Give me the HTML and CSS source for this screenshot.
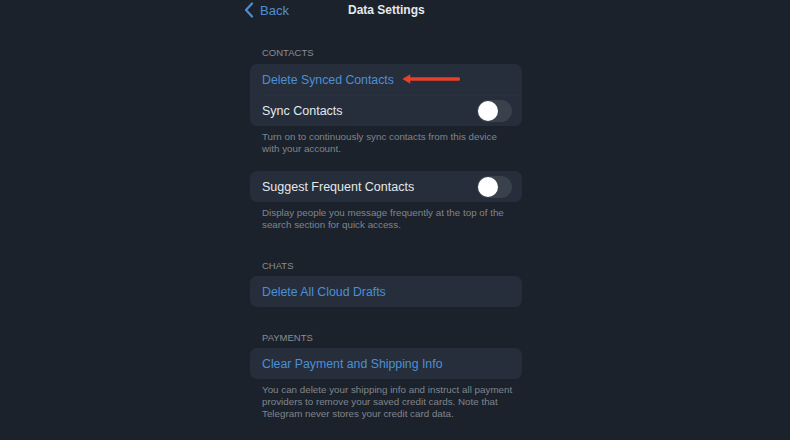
FILE: index.html
```html
<!DOCTYPE html>
<html>
<head>
<meta charset="utf-8">
<link rel="stylesheet" href="styles.css">
</head>
<body>
<div class="page">
  <header class="nav">
    <div class="back">
      <svg class="chev" width="10" height="16" viewBox="0 0 10 16"><path d="M8 1.5 L2 8 L8 14.5" fill="none" stroke="#4d8fd5" stroke-width="2.2" stroke-linecap="round" stroke-linejoin="round"/></svg>
      <span>Back</span>
    </div>
    <div class="title">Data Settings</div>
  </header>

  <div class="label first">CONTACTS</div>
  <div class="card">
    <div class="row link">
      <span>Delete Synced Contacts</span>
      <svg class="arrow" width="58" height="10" viewBox="0 0 58 10"><path d="M0.3 5 L8.5 0.3 L8 3.3 L57 3.3 Q58 3.3 58 5 Q58 6.7 57 6.7 L8 6.7 L8.5 9.7 Z" fill="#e8402a"/></svg>
    </div>
    <div class="sep"></div>
    <div class="row short">
      <span>Sync Contacts</span>
      <div class="toggle"><div class="knob"></div></div>
    </div>
  </div>
  <div class="foot">Turn on to continuously sync contacts from this device<br>with your account.</div>

  <div class="card card2">
    <div class="row">
      <span>Suggest Frequent Contacts</span>
      <div class="toggle"><div class="knob"></div></div>
    </div>
  </div>
  <div class="foot">Display people you message frequently at the top of the<br>search section for quick access.</div>

  <div class="label chats">CHATS</div>
  <div class="card">
    <div class="row link"><span>Delete All Cloud Drafts</span></div>
  </div>

  <div class="label pay">PAYMENTS</div>
  <div class="card">
    <div class="row link"><span>Clear Payment and Shipping Info</span></div>
  </div>
  <div class="foot">You can delete your shipping info and instruct all payment<br>providers to remove your saved credit cards. Note that<br>Telegram never stores your credit card data.</div>
</div>
</body>
</html>
```
FILE: styles.css
```css
html, body {
  margin: 0;
  padding: 0;
  background: #1c222b;
  height: 100%;
  overflow: hidden;
}
body {
  font-family: "Liberation Sans", Arial, sans-serif;
  color: #e6e8eb;
}
.page {
  width: 272px;
  margin-left: 250px;
  display: flex;
  flex-direction: column;
}
.nav {
  height: 20px;
  display: flex;
  align-items: center;
  position: relative;
  margin-left: -6px;
}
.back {
  display: flex;
  align-items: center;
  gap: 6px;
  color: #4d8fd5;
  font-size: 13px;
}
.chev { display: block; }
.title {
  position: absolute;
  left: 104px;
  top: 0;
  line-height: 20px;
  font-size: 12px;
  font-weight: bold;
  color: #e6e8eb;
}
.label {
  font-size: 9.5px;
  line-height: 12px;
  color: #878d96;
  padding-left: 12px;
  margin-bottom: 5px;
}
.label.first { margin-top: 27px; }
.label.chats { margin-top: 29px; margin-bottom: 4px; }
.label.pay { margin-top: 25px; margin-bottom: 4px; }
.card {
  background: #252e3a;
  border-radius: 7px;
  display: flex;
  flex-direction: column;
}
.card2 { margin-top: 16px; }
.row {
  height: 31px;
  display: flex;
  align-items: center;
  padding: 0 10px 0 12px;
  font-size: 12.5px;
  color: #e6e8eb;
}
.row.short { height: 30px; }
.row.link { color: #4d8fd5; font-size: 12.3px; }
.row .toggle { margin-left: auto; }
.sep {
  height: 0;
  border-top: 1px solid #28313d;
  margin-left: 12px;
}
.arrow {
  margin-left: 8px;
  margin-top: -1px;
  display: block;
}
.toggle {
  width: 35px;
  height: 22px;
  border-radius: 11px;
  background: #39414c;
  position: relative;
}
.knob {
  position: absolute;
  left: 1px;
  top: 1px;
  width: 20px;
  height: 20px;
  border-radius: 50%;
  background: #ffffff;
}
.foot {
  font-size: 9.8px;
  line-height: 12px;
  color: #7f858e;
  padding: 5px 0 0 12px;
}
```
